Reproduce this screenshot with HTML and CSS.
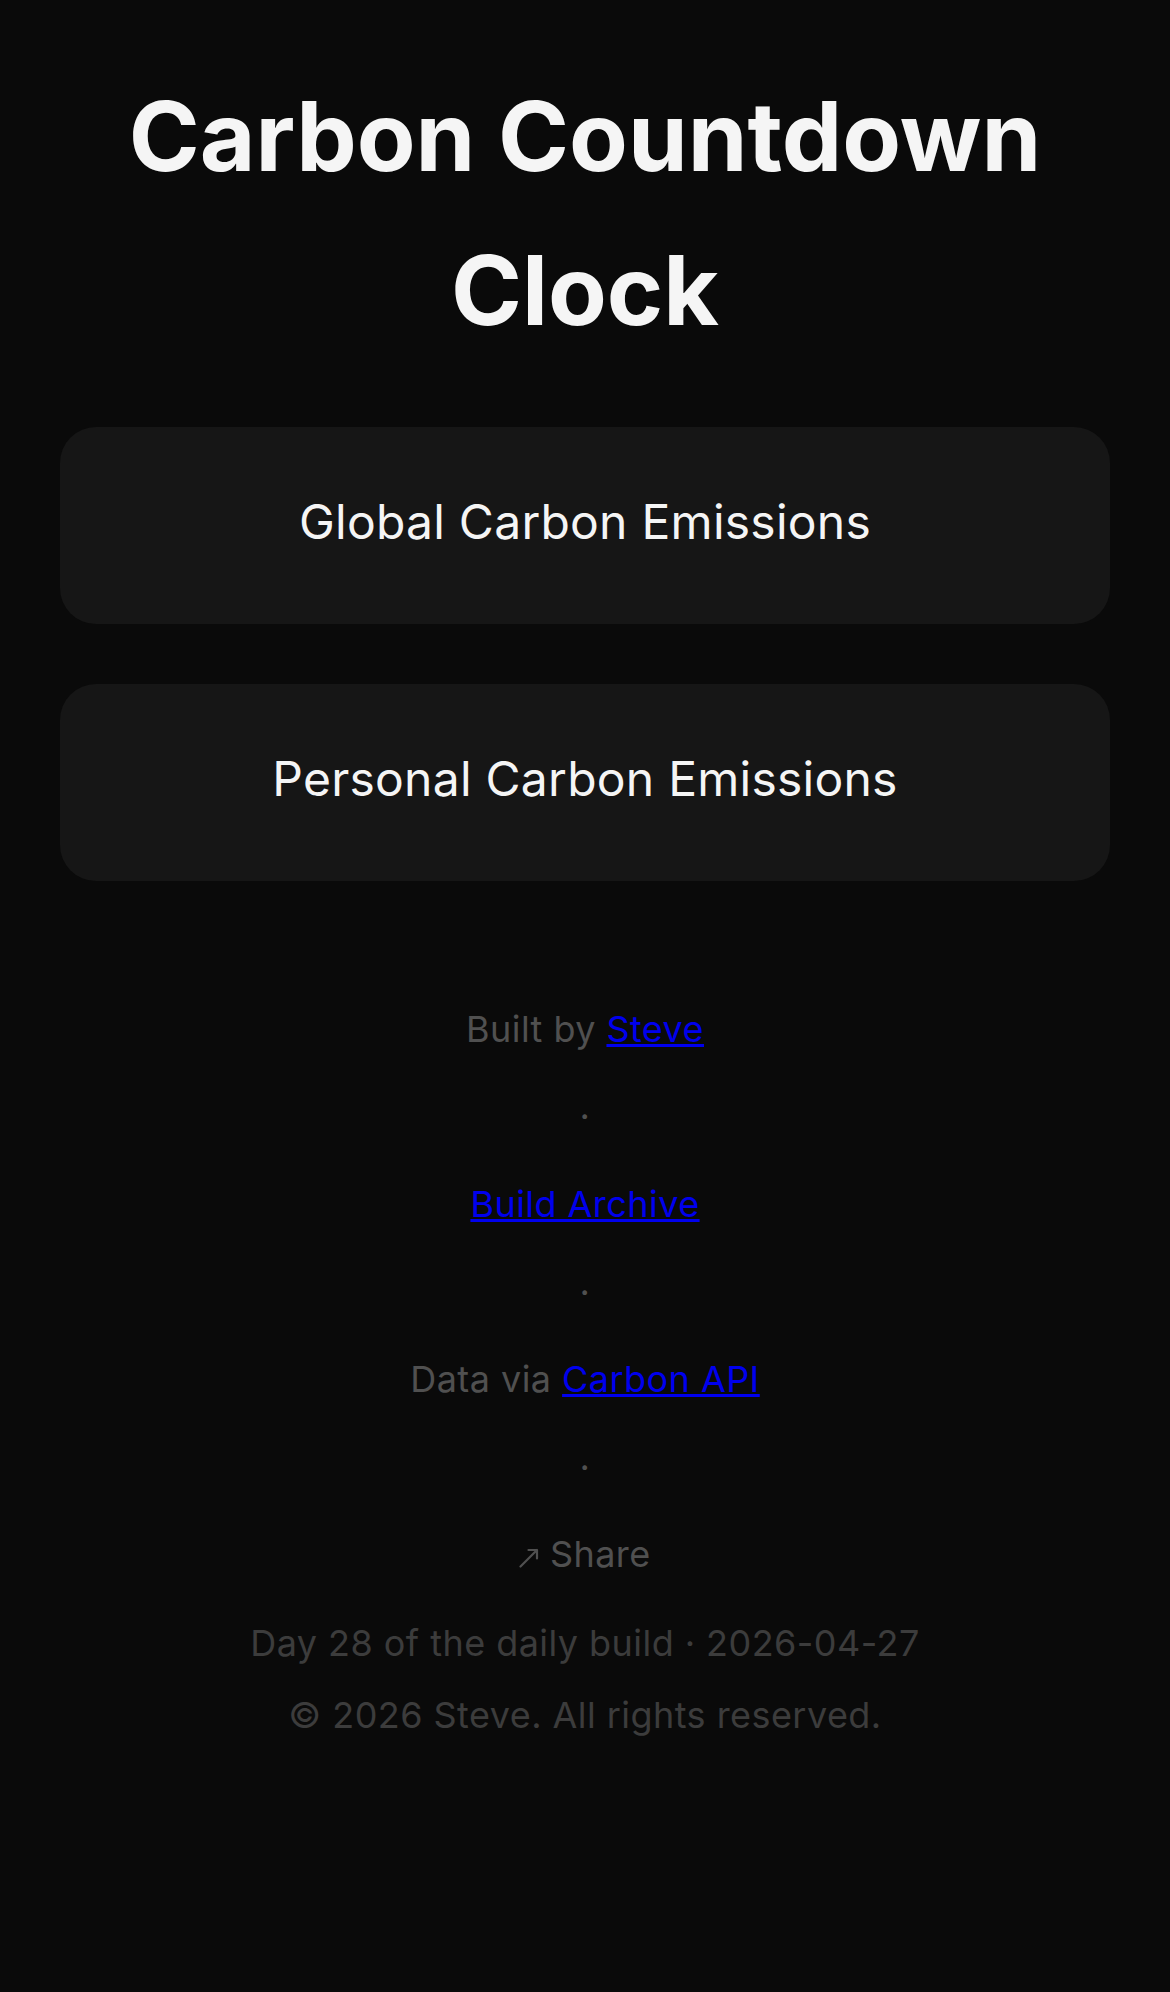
FILE: index.html
```html
<!DOCTYPE html>
<html lang="en">
<head>
<meta charset="utf-8">
<title>Carbon Countdown Clock</title>
<link rel="stylesheet" href="styles.css">
</head>
<body>
<main class="page">
  <h1 class="title">Carbon Countdown Clock</h1>
  <section class="card">
    <h2 class="card-title">Global Carbon Emissions</h2>
  </section>
  <section class="card">
    <h2 class="card-title">Personal Carbon Emissions</h2>
  </section>
  <footer class="site-footer">
    <div class="credits">
      <span class="credit">Built by <a href="#">Steve</a></span>
      <span class="sep">·</span>
      <a class="credit" href="#">Build Archive</a>
      <span class="sep">·</span>
      <span class="credit">Data via <a href="#">Carbon API</a></span>
      <span class="sep">·</span>
      <button class="share" type="button"><svg class="share-arrow" width="20" height="20" viewBox="0 0 20 20" aria-hidden="true"><path d="M1.5 18.5 L18 2 M9.5 2 H18 V10.5" fill="none" stroke="currentColor" stroke-width="2.2" stroke-linecap="round" stroke-linejoin="round"/></svg> Share</button>
    </div>
    <p class="meta">Day 28 of the daily build · 2026-04-27</p>
    <p class="meta">© 2026 Steve. All rights reserved.</p>
  </footer>
</main>
</body>
</html>
```

FILE: styles.css
```css
html, body {
  margin: 0;
  padding: 0;
  background: #0a0a0a;
}

body {
  font-family: Inter, "Noto Sans", "DejaVu Sans", sans-serif;
  color: #f5f5f5;
  min-height: 1992px;
}

.page {
  padding: 60px 60px 120px;
  display: flex;
  flex-direction: column;
}

.title {
  margin: 0 0 60px;
  font-size: 96px;
  font-weight: 700;
  line-height: 1.6;
  text-align: center;
  color: #f5f5f5;
}

.card {
  background: #161616;
  border-radius: 36px;
  padding: 57px 60px 63px;
  margin-bottom: 60px;
}

.card-title {
  margin: 0;
  font-size: 48px;
  font-weight: 400;
  line-height: 1.6;
  letter-spacing: 0.25px;
  text-align: center;
  color: #f5f5f5;
}

.site-footer {
  margin-top: 60px;
  display: flex;
  flex-direction: column;
  align-items: center;
  text-align: center;
  letter-spacing: 0.45px;
}

.credits {
  display: flex;
  flex-direction: column;
  align-items: center;
  gap: 30px;
  font-size: 36px;
  line-height: 1.6;
  color: #505050;
}

.credits a {
  color: #0000ee;
}

.sep {
  color: #505050;
}

.share {
  font-family: inherit;
  font-size: 36px;
  line-height: 1.6;
  letter-spacing: 0.45px;
  color: #505050;
  background: none;
  border: 0;
  padding: 0;
  cursor: pointer;
}

.share-arrow {
  display: inline-block;
  width: 20px;
  height: 20px;
  vertical-align: -1px;
}

.meta {
  margin: 0;
  font-size: 36px;
  line-height: 72px;
  color: #3c3c3c;
}

.meta:first-of-type {
  margin-top: 23px;
}
```
